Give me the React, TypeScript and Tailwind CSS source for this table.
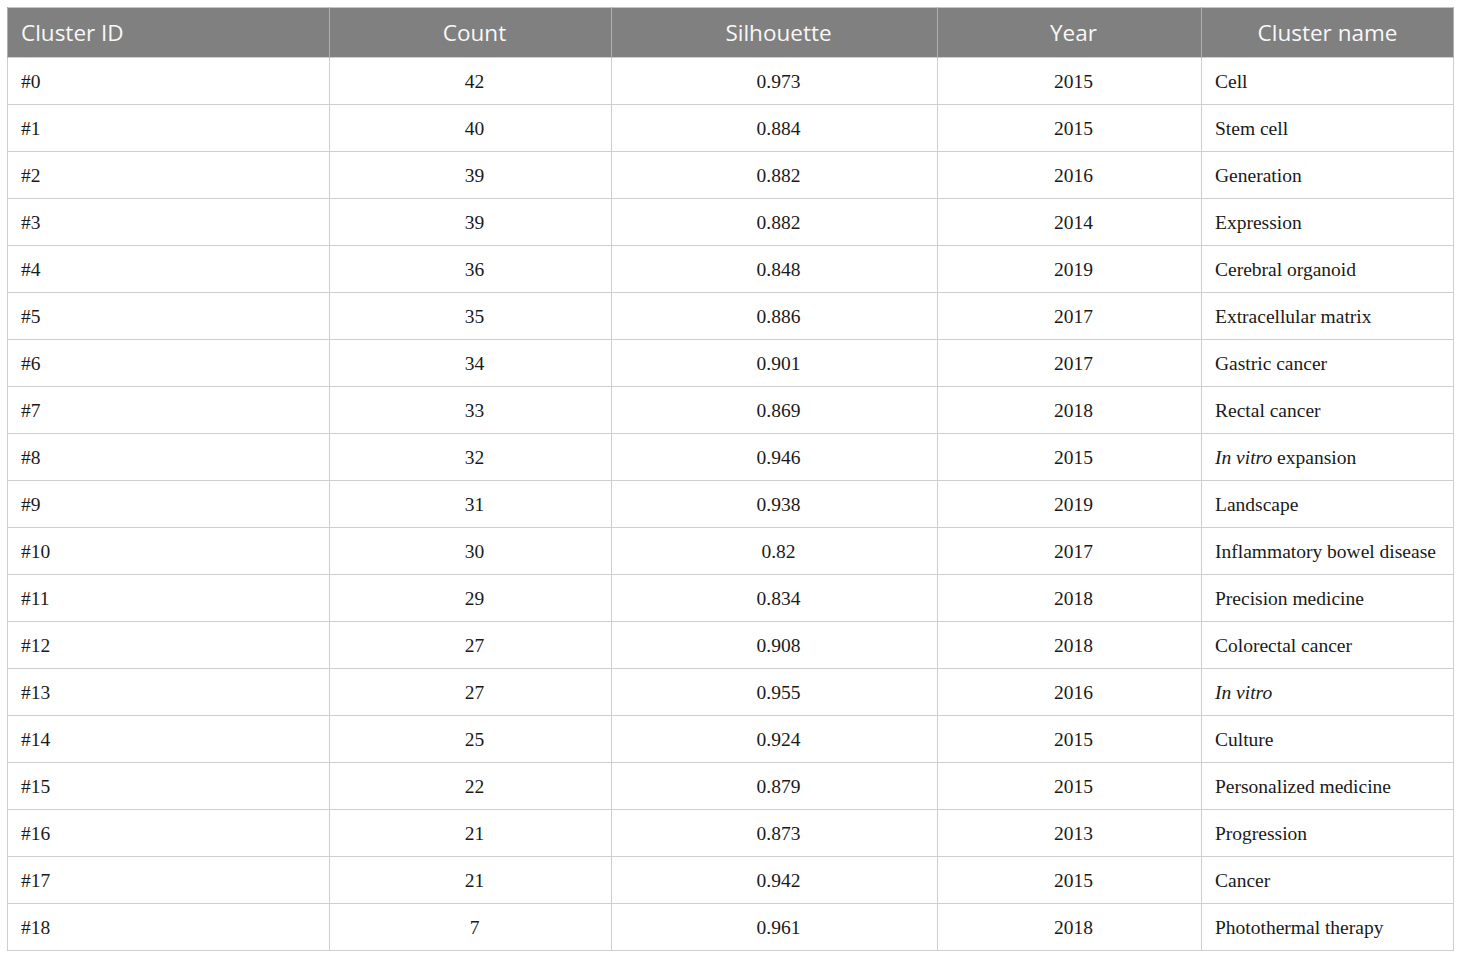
const rows: [string, string, string, string, React.ReactNode][] = [
  ["#0", "42", "0.973", "2015", "Cell"],
  ["#1", "40", "0.884", "2015", "Stem cell"],
  ["#2", "39", "0.882", "2016", "Generation"],
  ["#3", "39", "0.882", "2014", "Expression"],
  ["#4", "36", "0.848", "2019", "Cerebral organoid"],
  ["#5", "35", "0.886", "2017", "Extracellular matrix"],
  ["#6", "34", "0.901", "2017", "Gastric cancer"],
  ["#7", "33", "0.869", "2018", "Rectal cancer"],
  [
    "#8",
    "32",
    "0.946",
    "2015",
    <>
      <i>In vitro</i> expansion
    </>,
  ],
  ["#9", "31", "0.938", "2019", "Landscape"],
  ["#10", "30", "0.82", "2017", "Inflammatory bowel disease"],
  ["#11", "29", "0.834", "2018", "Precision medicine"],
  ["#12", "27", "0.908", "2018", "Colorectal cancer"],
  ["#13", "27", "0.955", "2016", <i>In vitro</i>],
  ["#14", "25", "0.924", "2015", "Culture"],
  ["#15", "22", "0.879", "2015", "Personalized medicine"],
  ["#16", "21", "0.873", "2013", "Progression"],
  ["#17", "21", "0.942", "2015", "Cancer"],
  ["#18", "7", "0.961", "2018", "Photothermal therapy"],
];

const cell = "border border-[#cfcfcf] pt-[2px]";
const left = "pl-[13px] pr-[9px] text-left";
const mid = "pl-[17px] pr-[9px] text-center";

export default function App() {
  return (
    <div className="min-h-[959px] w-[1460px] bg-white pt-[7px] pl-[7px]">
      <table className="w-[1447px] table-fixed border-collapse border border-[#c4c4c4]">
        <thead>
          <tr className="h-[50px] bg-[#808080] text-[22.5px] text-[#f7f7f7] [font-family:'Open_Sans',sans-serif]">
            <th className={`w-[322px] border-x border-[#b0b0b0] font-normal ${left}`}>Cluster ID</th>
            <th className={`w-[282px] border-x border-[#b0b0b0] font-normal ${mid}`}>Count</th>
            <th className={`w-[326px] border-x border-[#b0b0b0] font-normal ${mid}`}>Silhouette</th>
            <th className={`w-[264px] border-x border-[#b0b0b0] font-normal ${mid}`}>Year</th>
            <th className="w-[252px] border-x border-[#b0b0b0] px-[9px] text-center font-normal">Cluster name</th>
          </tr>
        </thead>
        <tbody className="text-[19.5px] text-[#1a1a1a] [font-family:'Liberation_Serif',serif]">
          {rows.map((r) => (
            <tr key={r[0]} className="h-[47px]">
              <td className={`${cell} ${left}`}>{r[0]}</td>
              <td className={`${cell} ${mid}`}>{r[1]}</td>
              <td className={`${cell} ${mid}`}>{r[2]}</td>
              <td className={`${cell} ${mid}`}>{r[3]}</td>
              <td className={`${cell} pl-[13px] pr-[4px] text-left whitespace-nowrap`}>{r[4]}</td>
            </tr>
          ))}
        </tbody>
      </table>
    </div>
  );
}
